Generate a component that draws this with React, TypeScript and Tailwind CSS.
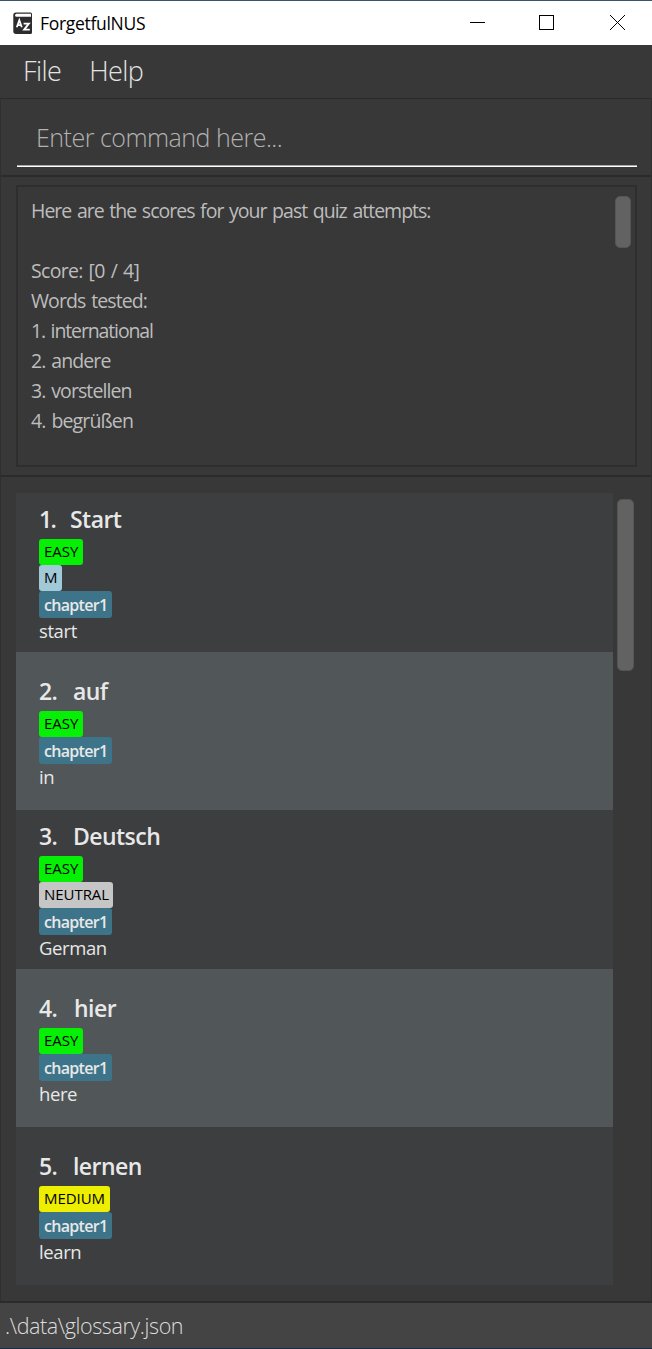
type Tag = { text: string; className: string };
type Entry = { word: string; gap: string; box: string; tags: Tag[]; meaning: string };

const EASY: Tag = { text: 'EASY', className: 'w-[44px] bg-[#06f006] text-black tracking-[0px]' };
const MALE: Tag = { text: 'M', className: 'w-[23px] bg-[#a1c9d8] text-black' };
const NEUTRAL: Tag = { text: 'NEUTRAL', className: 'w-[74px] bg-[#c6c6c6] text-black tracking-[-0.05px]' };
const MEDIUM: Tag = { text: 'MEDIUM', className: 'w-[71px] bg-[#eeee00] text-black tracking-[-0.05px]' };

const entries: Entry[] = [
  { word: 'Start', gap: 'w-[31px] tracking-[-1.6px]', box: 'h-[159px] pt-[5px] bg-[#3c3e3f]', tags: [EASY, MALE], meaning: 'start' },
  { word: 'auf', gap: 'w-[34px]', box: 'h-[158px] pt-[6px] bg-[#515658]', tags: [EASY], meaning: 'in' },
  { word: 'Deutsch', gap: 'w-[34px]', box: 'h-[159px] pt-[5px] bg-[#3c3e3f]', tags: [EASY, NEUTRAL], meaning: 'German' },
  { word: 'hier', gap: 'w-[35px]', box: 'h-[158px] pt-[6px] bg-[#515658]', tags: [EASY], meaning: 'here' },
  { word: 'lernen', gap: 'w-[34px]', box: 'h-[158px] pt-[6px] bg-[#3c3e3f]', tags: [MEDIUM], meaning: 'learn' },
];

const results = [
  { text: 'Here are the scores for your past quiz attempts:', tracking: 'tracking-[-1px]' },
  { text: '', tracking: '' },
  { text: 'Score: [0 / 4]', tracking: 'tracking-[-0.7px]' },
  { text: 'Words tested:', tracking: 'tracking-[-0.9px]' },
  { text: '1. international', tracking: 'tracking-[-1.12px]' },
  { text: '2. andere', tracking: 'tracking-[-0.9px]' },
  { text: '3. vorstellen', tracking: 'tracking-[-0.9px]' },
  { text: '4. begrüßen', tracking: 'tracking-[-0.85px]' },
];

function AppIcon() {
  return (
    <svg width="20" height="23" viewBox="0 0 20 23" className="shrink-0">
      <path d="M3 0.5H17.5Q19 0.5 19 2V20.5Q19 22 17.5 22H3Q0.3 22 0.3 19.3V3.2Q0.3 0.5 3 0.5Z" fill="#2c2c2e" />
      <path d="M3.5 1.8H18V4.8H3.5Q2.1 4.8 2.1 3.3Q2.1 1.8 3.5 1.8Z" fill="#fff" />
      <path d="M3.8 15.2L6.3 8.2L8.8 15.2M4.7 13.1H7.9" stroke="#fff" strokeWidth="1.8" fill="none" />
      <path d="M10.6 11.6H15.8L11.2 17.6H16.8" stroke="#fff" strokeWidth="1.9" fill="none" />
    </svg>
  );
}

function TitleBar() {
  return (
    <header className="flex h-[45px] shrink-0 items-center border-t border-[#3a5564] bg-white pl-[13px] text-black">
      <AppIcon />
      <h1 className="ml-[7px] flex-1 pt-px text-[17.5px] tracking-[-0.3px]">ForgetfulNUS</h1>
      <svg width="182" height="44" viewBox="0 0 182 44" fill="none" stroke="#000" className="shrink-0">
        <path d="M0 21.5H15M69.5 14.5H83.5V28.5H69.5Z" shapeRendering="crispEdges" />
        <path d="M140 14L155 29M155 14L140 29" strokeWidth="1" />
      </svg>
    </header>
  );
}

function EntryCard({ entry, index }: { entry: Entry; index: number }) {
  return (
    <li className={`flex flex-col items-start justify-center pl-[23px] text-[#e8e8e8] ${entry.box}`}>
      <div className="flex h-[34px] items-center pb-[5px] text-[23px] font-semibold tracking-[-0.55px]">
        <span className={entry.gap}>{index}.</span>
        <span>{entry.word}</span>
      </div>
      {entry.tags.map((tag) => (
        <div key={tag.text} className={`flex h-[26px] items-center rounded-[3px] pb-[2px] pl-[5px] text-[15px] ${tag.className}`}>
          {tag.text}
        </div>
      ))}
      <div className="flex h-[27px] w-[73px] items-center rounded-[3px] bg-[#3e7489] pl-[5px] text-[16px] font-semibold tracking-[-0.7px]">
        chapter1
      </div>
      <div className="flex h-[27px] items-center pb-[2px] text-[18.5px] tracking-[-0.4px]">{entry.meaning}</div>
    </li>
  );
}

export default function App() {
  return (
    <div className="flex h-[1349px] w-[652px] flex-col overflow-hidden whitespace-nowrap bg-[#383838] font-['Open_Sans','Noto_Sans',sans-serif]">
      <TitleBar />
      <nav className="flex h-[53px] shrink-0 items-center gap-[28px] pl-[23px] text-[27px] font-light text-[#e4e4e4]">
        <span className="tracking-[-0.6px]">File</span>
        <span className="tracking-[-0.6px]">Help</span>
      </nav>
      <main className="flex flex-1 flex-col border-x border-[#2f2f2f]">
        <section className="h-[79px] shrink-0 border-y border-t-[#2b2b2b] border-b-[#2b2b2b] border-b-2 pl-[16px] pr-[14px]">
          <div className="flex h-[68px] items-center border-b border-white pl-[19px] pt-[11px] text-[25px] font-light tracking-[-0.5px] text-[#b2b2b2] shadow-[inset_0_-1px_#a8a8a8]">
            Enter command here...
          </div>
        </section>
        <section className="h-[300px] shrink-0 border-b-2 border-[#2b2b2b] pl-[15px] pr-[14px] pt-[8px]">
          <div className="flex h-[282px] justify-between border-2 border-[#2e2e2e] pl-[13px] pr-[4px] pt-[9px]">
            <div className="text-[19.5px] leading-[30px] text-[#bdbdbd] [word-spacing:1.6px]">
              {results.map((line, i) => (
                <p key={i} className={`h-[30px] ${line.tracking}`}>{line.text}</p>
              ))}
            </div>
            <div className="h-[52px] w-[16px] rounded-[5px] border border-[#555] bg-[#626262]" />
          </div>
        </section>
        <section className="flex flex-1 pl-[15px] pt-[16px]">
          <ul className="w-[597px]">
            {entries.map((entry, i) => (
              <EntryCard key={entry.word} entry={entry} index={i + 1} />
            ))}
          </ul>
          <div className="ml-[4px] mt-[6px] h-[172px] w-[17px] rounded-[5px] border border-[#555] bg-[#626262]" />
        </section>
      </main>
      <footer className="flex h-[48px] shrink-0 items-center border-b border-t-2 border-b-[#1b2c42] border-t-[#2b2b2b] bg-[#444444] pl-[5px] pt-px text-[21.5px] font-light tracking-[-0.4px] text-[#dddddd]">
        .\data\glossary.json
      </footer>
    </div>
  );
}
